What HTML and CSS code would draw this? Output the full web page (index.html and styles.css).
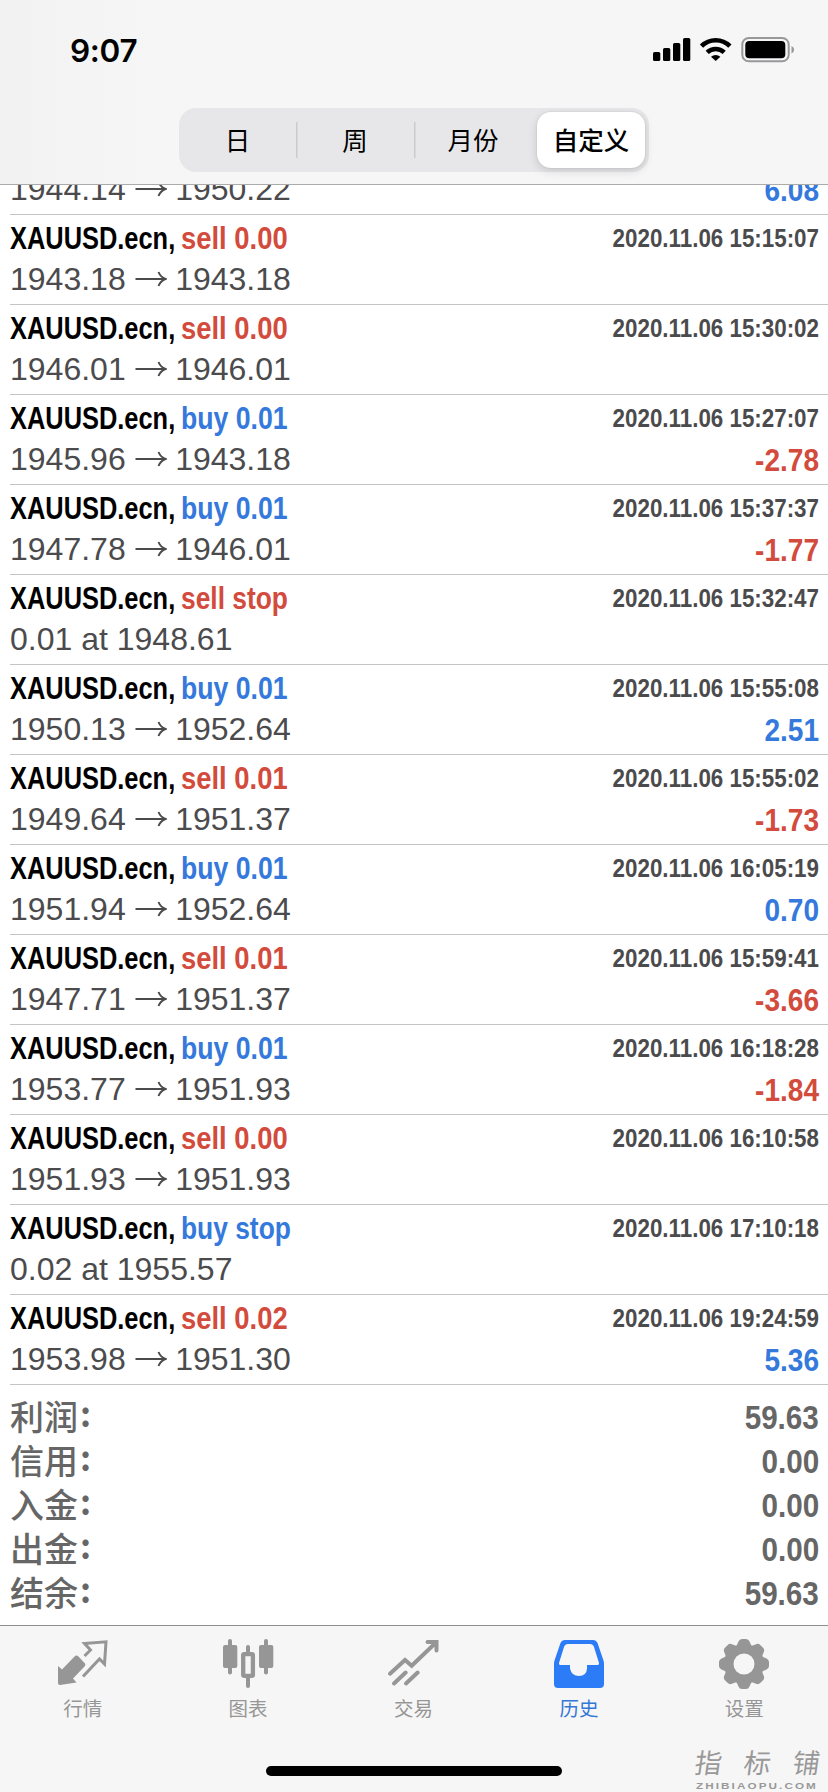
FILE: index.html
```html
<!DOCTYPE html>
<html lang="zh-CN">
<head>
<meta charset="utf-8">
<title>历史</title>
<link rel="stylesheet" href="styles.css">
</head>
<body>
<svg class="defs" width="0" height="0">
  <symbol id="arrow" viewBox="0 0 32 18"><path d="M0.5 9H30.500M23.500 2Q25.500 7 30.500 9Q25.500 11 23.500 16" fill="none" stroke="currentColor" stroke-width="2"/></symbol>
</svg>
<header class="header">
  <div class="status">
    <span class="clock">9:07</span>
    <svg class="status-icons" width="146" height="28" viewBox="0 0 146 28">
      <rect x="0" y="15" width="7.300" height="9" rx="1.600"/>
      <rect x="10" y="11" width="7.300" height="13" rx="1.600"/>
      <rect x="20" y="6" width="7.300" height="18" rx="1.600"/>
      <rect x="30" y="1" width="7.300" height="23" rx="1.600"/>
      <path d="M48.500 9.200a20 20 0 0 1 28.400 0M54.200 15.400a12.500 12.500 0 0 1 17 0" fill="none" stroke="#000" stroke-width="4.600"/>
      <path d="M62.700 24l-4.700-4.300a7.300 7.300 0 0 1 9.400 0z"/>
      <rect x="89.300" y="1" width="46.400" height="23.300" rx="6.500" fill="none" stroke="#98989b" stroke-width="2"/>
      <rect x="92.300" y="4" width="40" height="17.300" rx="4"/>
      <path d="M138.500 9v7.500a4 4 0 0 0 0-7.500z" fill="#98989b"/>
    </svg>
  </div>
  <nav class="segments">
    <span class="segment">日</span>
    <span class="segment ruled">周</span>
    <span class="segment ruled">月份</span>
    <span class="segment active">自定义</span>
  </nav>
</header>
<main class="history">
  <div class="deals">
    <article class="deal"><b class="symbol">XAUUSD.ecn,</b><b class="kind buy">buy 0.01</b><time>2020.11.06 15:05:12</time><p class="prices"><span>1944.14</span><svg class="arrow"><use href="#arrow"/></svg><span>1950.22</span></p><b class="profit buy">6.08</b></article>
    <article class="deal"><b class="symbol">XAUUSD.ecn,</b><b class="kind sell">sell 0.00</b><time>2020.11.06 15:15:07</time><p class="prices"><span>1943.18</span><svg class="arrow"><use href="#arrow"/></svg><span>1943.18</span></p></article>
    <article class="deal"><b class="symbol">XAUUSD.ecn,</b><b class="kind sell">sell 0.00</b><time>2020.11.06 15:30:02</time><p class="prices"><span>1946.01</span><svg class="arrow"><use href="#arrow"/></svg><span>1946.01</span></p></article>
    <article class="deal"><b class="symbol">XAUUSD.ecn,</b><b class="kind buy">buy 0.01</b><time>2020.11.06 15:27:07</time><p class="prices"><span>1945.96</span><svg class="arrow"><use href="#arrow"/></svg><span>1943.18</span></p><b class="profit sell">-2.78</b></article>
    <article class="deal"><b class="symbol">XAUUSD.ecn,</b><b class="kind buy">buy 0.01</b><time>2020.11.06 15:37:37</time><p class="prices"><span>1947.78</span><svg class="arrow"><use href="#arrow"/></svg><span>1946.01</span></p><b class="profit sell">-1.77</b></article>
    <article class="deal"><b class="symbol">XAUUSD.ecn,</b><b class="kind sell stop">sell stop</b><time>2020.11.06 15:32:47</time><p class="prices">0.01 at 1948.61</p></article>
    <article class="deal"><b class="symbol">XAUUSD.ecn,</b><b class="kind buy">buy 0.01</b><time>2020.11.06 15:55:08</time><p class="prices"><span>1950.13</span><svg class="arrow"><use href="#arrow"/></svg><span>1952.64</span></p><b class="profit buy">2.51</b></article>
    <article class="deal"><b class="symbol">XAUUSD.ecn,</b><b class="kind sell">sell 0.01</b><time>2020.11.06 15:55:02</time><p class="prices"><span>1949.64</span><svg class="arrow"><use href="#arrow"/></svg><span>1951.37</span></p><b class="profit sell">-1.73</b></article>
    <article class="deal"><b class="symbol">XAUUSD.ecn,</b><b class="kind buy">buy 0.01</b><time>2020.11.06 16:05:19</time><p class="prices"><span>1951.94</span><svg class="arrow"><use href="#arrow"/></svg><span>1952.64</span></p><b class="profit buy">0.70</b></article>
    <article class="deal"><b class="symbol">XAUUSD.ecn,</b><b class="kind sell">sell 0.01</b><time>2020.11.06 15:59:41</time><p class="prices"><span>1947.71</span><svg class="arrow"><use href="#arrow"/></svg><span>1951.37</span></p><b class="profit sell">-3.66</b></article>
    <article class="deal"><b class="symbol">XAUUSD.ecn,</b><b class="kind buy">buy 0.01</b><time>2020.11.06 16:18:28</time><p class="prices"><span>1953.77</span><svg class="arrow"><use href="#arrow"/></svg><span>1951.93</span></p><b class="profit sell">-1.84</b></article>
    <article class="deal"><b class="symbol">XAUUSD.ecn,</b><b class="kind sell">sell 0.00</b><time>2020.11.06 16:10:58</time><p class="prices"><span>1951.93</span><svg class="arrow"><use href="#arrow"/></svg><span>1951.93</span></p></article>
    <article class="deal"><b class="symbol">XAUUSD.ecn,</b><b class="kind buy stop">buy stop</b><time>2020.11.06 17:10:18</time><p class="prices">0.02 at 1955.57</p></article>
    <article class="deal"><b class="symbol">XAUUSD.ecn,</b><b class="kind sell">sell 0.02</b><time>2020.11.06 19:24:59</time><p class="prices"><span>1953.98</span><svg class="arrow"><use href="#arrow"/></svg><span>1951.30</span></p><b class="profit buy">5.36</b></article>
  </div>
  <dl class="totals">
    <div class="total"><dt>利润<i>:</i></dt><dd>59.63</dd></div>
    <div class="total"><dt>信用<i>:</i></dt><dd>0.00</dd></div>
    <div class="total"><dt>入金<i>:</i></dt><dd>0.00</dd></div>
    <div class="total"><dt>出金<i>:</i></dt><dd>0.00</dd></div>
    <div class="total"><dt>结余<i>:</i></dt><dd>59.63</dd></div>
  </dl>
</main>
<footer class="tabbar">
  <nav class="tabs">
    <a class="tab">
      <svg width="54" height="54" viewBox="0 0 54 54">
        <path fill="#969696" d="M2 29L6 32.500L18.500 19.500Q20.500 17.500 22.500 19.500L29 26.500Q30 28 28.500 29.500L17 41.500L20.500 45.500L4 48Q2 48 2 46z"/>
        <path fill="none" stroke="#969696" stroke-width="3" d="M28.500 19L34.500 13L28.500 6.500L50 4.800L48.500 27L43.500 22L27 39.500"/>
      </svg>
      <span>行情</span>
    </a>
    <a class="tab">
      <svg width="54" height="54" viewBox="0 0 54 54">
        <g fill="#969696"><rect x="2" y="8" width="14.300" height="23" rx="2"/><rect x="7" y="2" width="4" height="35.500" rx="2"/><rect x="38" y="8" width="14.300" height="23" rx="2"/><rect x="43" y="2" width="4" height="35.500" rx="2"/><rect x="25" y="8" width="4" height="10" rx="2"/><rect x="25" y="39" width="4" height="12" rx="2"/></g>
        <rect x="22.200" y="17.200" width="9.700" height="21.600" rx="1" fill="none" stroke="#969696" stroke-width="4.300"/>
      </svg>
      <span>图表</span>
    </a>
    <a class="tab">
      <svg width="54" height="54" viewBox="0 0 54 54">
        <path d="M4 36.700L19 23L25.700 28.700L50 5.500M41.500 5H50.500V13.500M8 46.500L19.700 35.500M20 46.500L31.700 35.500" fill="none" stroke="#969696" stroke-width="4" stroke-linecap="round"/>
      </svg>
      <span>交易</span>
    </a>
    <a class="tab current">
      <svg width="54" height="54" viewBox="0 0 54 54">
        <path fill="#2c7cf7" fill-rule="evenodd" d="M13 3H41Q44.500 3 45.700 6.500L51 22Q52 24.500 52 27V47Q52 51 48 51H6Q2 51 2 47V27Q2 24.500 3 22L8.300 6.500Q9.500 3 13 3zM16 7Q13 7 12 10L7 26Q6.500 28 8.500 28H18V31.500Q19.500 39 27 39Q34.500 39 35 31.500V28H45.500Q47.500 28 47 26L42 10Q41 7 38 7z"/>
      </svg>
      <span>历史</span>
    </a>
    <a class="tab">
      <svg width="54" height="54" viewBox="0 0 54 54">
        <g fill="#969696"><circle cx="27" cy="27" r="20"/>
        <path id="tooth" d="M19.500 9L21.500 4.500Q22.500 2 25 2H29Q31.500 2 32.500 4.500L34.500 9V45L32.500 49.500Q31.500 52 29 52H25Q22.500 52 21.500 49.500L19.500 45z"/><use href="#tooth" transform="rotate(45 27 27)"/><use href="#tooth" transform="rotate(90 27 27)"/><use href="#tooth" transform="rotate(135 27 27)"/></g>
        <circle cx="27" cy="27" r="10.500" fill="#f6f6f6"/>
      </svg>
      <span>设置</span>
    </a>
  </nav>
  <div class="home-indicator"></div>
  <div class="watermark"><div class="mark-name">指标铺</div><div class="mark-site">ZHIBIAOPU.COM</div></div>
</footer>
</body>
</html>
```
FILE: styles.css
```css
* { box-sizing: border-box; }
body { margin: 0; width: 828px; height: 1792px; overflow: hidden; display: flex; flex-direction: column; background: #fff; font-family: "Liberation Sans", "Noto Sans CJK SC", sans-serif; }
p, dl, dd { margin: 0; }
.defs { position: absolute; }
.header { flex: none; height: 185px; background: linear-gradient(90deg, #f2f2f2, #f6f6f7 20%, #f6f6f7); border-bottom: 1px solid #ababab; }
.status { height: 108px; display: flex; justify-content: space-between; padding: 37px 29px 0 70px; }
.clock { font: 600 31.500px/27px Inter, sans-serif; letter-spacing: -0.3px; }
.segments { margin: 0 auto; width: 470px; height: 64px; padding: 4px 0; border-radius: 17px; background: #e7e7e9; display: grid; grid-template-columns: 117px 118px 118px 117px; }
.segment { font: 400 25.500px/54px "Noto Sans CJK SC", sans-serif; text-align: center; }
.ruled { background: linear-gradient(#cbcbce, #cbcbce) left center / 1.500px 36px no-repeat; }
.active { margin: 0 4px 0 5px; font-weight: 500; background: #fff; border-radius: 14px; box-shadow: 0 3px 10px rgba(0,0,0,.14), 0 0 2px rgba(0,0,0,.12); }
.history { flex: 1; min-height: 0; overflow: hidden; }
.deals { margin-top: -60px; padding-left: 10px; }
.deal { height: 90px; border-bottom: 1px solid #c4c4c6; padding-right: 9px; display: grid; grid-template-columns: 171px 1fr auto; grid-template-rows: 46px 43px; white-space: nowrap; color: #4b4b4d; }
.symbol, .kind { justify-self: start; font-size: 32px; line-height: 46px; transform-origin: left; }
.symbol { margin-right: -50px; color: #000; transform: scaleX(.794); }
.kind.sell { transform: scaleX(.856); }
.kind.buy { transform: scaleX(.832); }
.kind.stop { transform: scaleX(.824); }
.deal time { font-size: 26px; line-height: 47px; font-weight: 700; text-align: right; transform: scaleX(.86); transform-origin: right; width: 243px; }
.prices { grid-column: 1 / 3; grid-row: 2; display: flex; align-items: flex-start; font-size: 32px; line-height: 36px; white-space: pre; }
.prices .arrow { width: 32px; height: 18px; margin: 9px 8.500px 0 9px; }
.profit { grid-column: 3; grid-row: 2; font-size: 31.500px; line-height: 38px; text-align: right; transform: scaleX(.89); transform-origin: right; }
.buy { color: #3479db; }
.sell { color: #d24b3d; }
.totals { padding: 11px 9px 0 10px; color: #666; }
.total { height: 44px; display: flex; justify-content: space-between; }
.total dt { font: 500 34px/40px "Noto Sans CJK SC", sans-serif; }
.total i { display: inline-block; font-style: normal; font-weight: 700; margin-left: 2px; transform: translateY(-3.500px); }
.total dd { font-size: 33.500px; line-height: 44px; font-weight: 700; transform: scaleX(.885); transform-origin: right; }
.tabbar { flex: none; height: 167px; border-top: 1px solid #8e8e90; background: #f6f6f6; position: relative; }
.tabs { display: grid; grid-template-columns: repeat(5, 1fr); padding: 11px 1px 0 0; }
.tab { display: flex; flex-direction: column; align-items: center; gap: 3px; color: #969696; font: 400 19.500px/28px "Noto Sans CJK SC", sans-serif; }
.current { color: #3478d6; }
.home-indicator { position: absolute; left: 266px; top: 140px; width: 296px; height: 10px; border-radius: 5px; background: #000; }
.watermark { position: absolute; left: 695px; top: 118px; width: 130px; color: #999; }
.mark-name { font: 400 27px/36px "Noto Sans CJK SC", sans-serif; letter-spacing: 22px; white-space: nowrap; transform: skewX(-8deg); }
.mark-site { font: 700 9px/12px "Liberation Sans", sans-serif; letter-spacing: 1.600px; transform: scaleX(1.300); transform-origin: left; margin-left: 1px; white-space: nowrap; }
```
